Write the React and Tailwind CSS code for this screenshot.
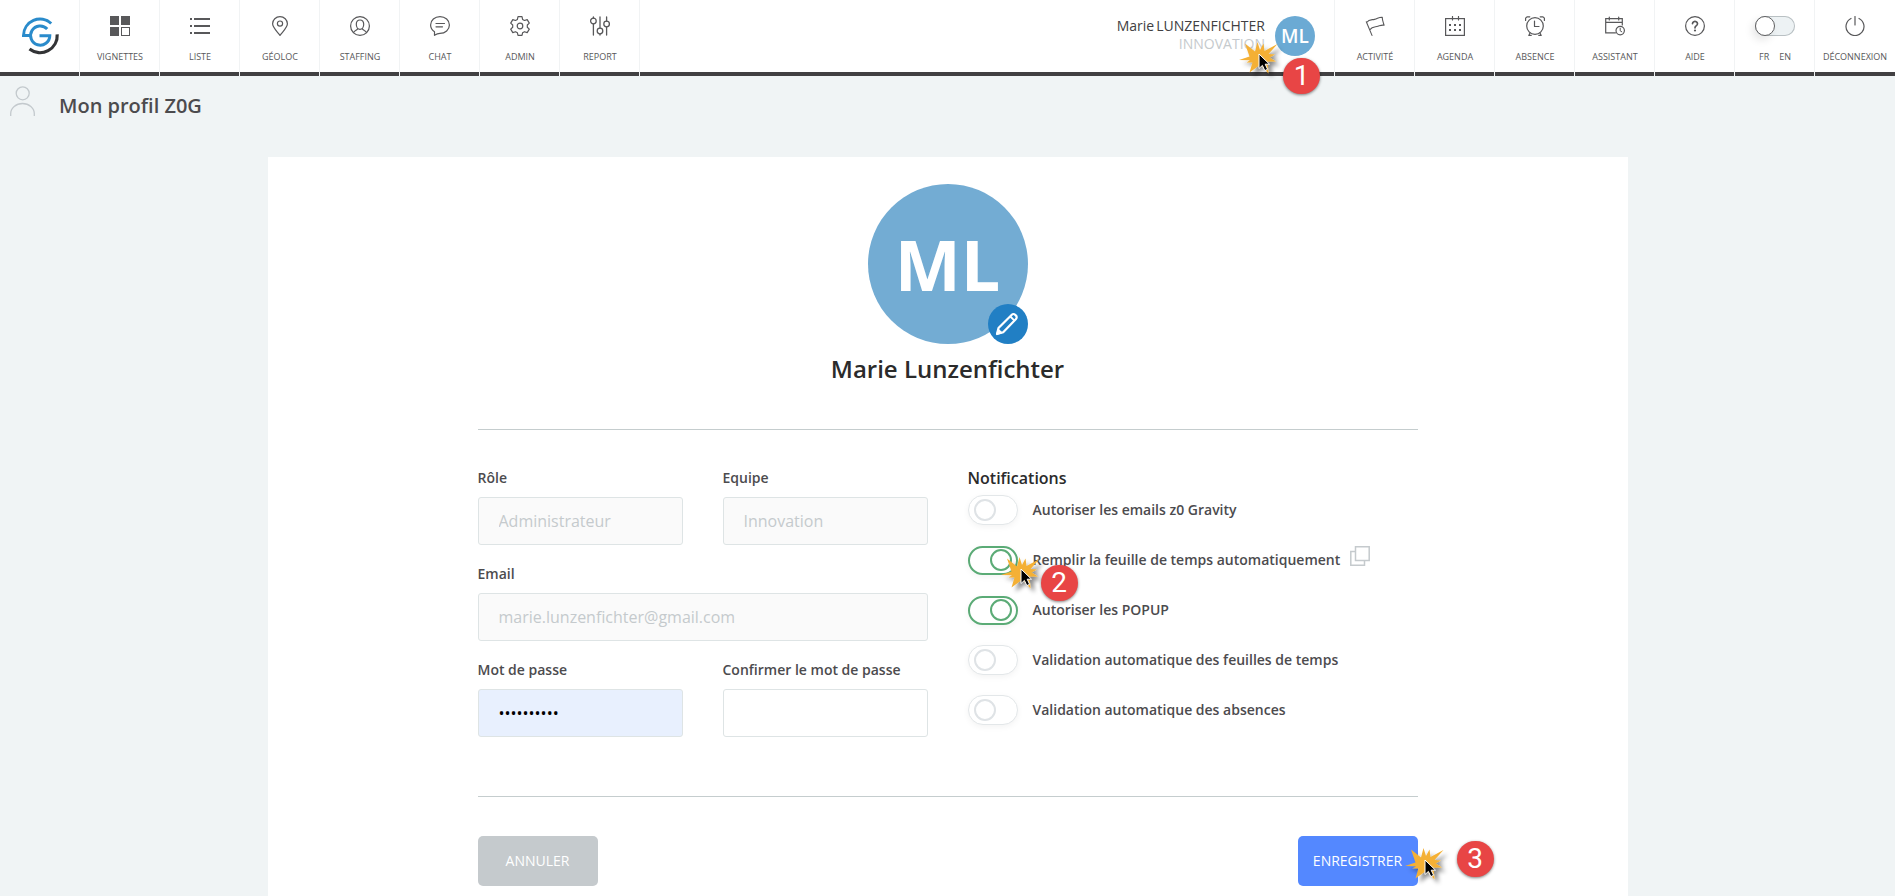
import React from "react";

const stroke = {
  fill: "none",
  stroke: "currentColor",
  strokeWidth: 1.2,
  strokeLinecap: "round",
  strokeLinejoin: "round",
};

function Icon({ children }) {
  return (
    <svg viewBox="0 0 20 20" className="size-5" aria-hidden="true" {...stroke}>
      {children}
    </svg>
  );
}

const icons = {
  vignettes: (
    <Icon>
      <g fill="currentColor" stroke="none">
        <rect width="9" height="9" />
        <rect x="11" width="9" height="9" />
        <rect y="11" width="9" height="9" />
      </g>
      <rect x="11.5" y="11.5" width="8" height="8" strokeWidth="1" strokeLinejoin="miter" />
    </Icon>
  ),
  liste: (
    <Icon>
      <g fill="currentColor" stroke="none">
        <rect y="2" width="2" height="2" />
        <rect x="4" y="2" width="16" height="2" />
        <rect y="9" width="2" height="2" />
        <rect x="4" y="9" width="16" height="2" />
        <rect y="16" width="2" height="2" />
        <rect x="4" y="16" width="16" height="2" />
      </g>
    </Icon>
  ),
  geoloc: (
    <Icon>
      <path d="M10 19.4C7.4 15.8 2.6 11.6 2.6 7.8a7.4 7.2 0 0 1 14.8 0c0 3.800-4.800 8-7.400 11.600Z" />
      <circle cx="10" cy="7.600" r="2.600" />
    </Icon>
  ),
  staffing: (
    <Icon>
      <circle cx="10" cy="10" r="9.400" />
      <path d="M10 4c-2.400 0-3.700 1.700-3.700 4.200 0 2.900 1.600 5.200 3.700 5.200s3.700-2.300 3.700-5.200C13.700 5.700 12.400 4 10 4Z" />
      <path d="M7.700 12.600c0 1.700-3 1.600-4.200 3.900M12.300 12.600c0 1.700 3 1.600 4.200 3.900" />
    </Icon>
  ),
  chat: (
    <Icon>
      <path d="M4.500 19.300V15.700C1.900 14 .6 11.600.6 9c0-4.700 4.200-8.400 9.400-8.400s9.400 3.700 9.400 8.400-4.200 8.400-9.400 8.400c-2.200 0-4 .9-5.500 1.900Z" />
      <path d="M6 7.500h8.500M6 10.800h6.500" />
    </Icon>
  ),
  admin: (
    <Icon>
      <path d="M8 .7h4l.6 2.700 1.900 1.100 2.700-.9 2.100 3.500-2 1.900v2.200l2 1.900-2.100 3.500-2.700-.9-1.900 1.100-.6 2.600H8l-.6-2.600-1.900-1.100-2.700.9-2.100-3.500 2-1.900V9L.7 7.100l2.100-3.500 2.700.9 1.900-1.100Z" />
      <circle cx="10" cy="10" r="2.800" />
    </Icon>
  ),
  report: (
    <Icon>
      <g strokeWidth="1.300">
        <path d="M3.400 1v1.200M3.400 8v11M10 1v11M10 18v1M16.600 1v4.200M16.600 11v8" />
        <circle cx="3.400" cy="5" r="2.800" />
        <circle cx="10" cy="15" r="2.800" />
        <circle cx="16.600" cy="8" r="2.800" />
      </g>
    </Icon>
  ),
  activite: (
    <Icon>
      <path
        strokeWidth="1.100"
        d="M1.300 5.800 7 19.400M1.600 6.500C4 3 6.500 4 9.500 3.400 12.500 2.800 14 1 17.300 1.300c-.2 2.500 1 5.200 1.800 7.900-3.200-.5-4.600.8-7.200 1.300-2.800.5-4.900.2-7.200 3.300"
      />
    </Icon>
  ),
  agenda: (
    <Icon>
      <rect x=".6" y="2.600" width="18.800" height="16.800" strokeLinejoin="miter" />
      <path d="M7.500.5v3.500M13.500.5v3.500" />
      <g fill="currentColor" stroke="none">
        <rect x="4" y="8" width="2" height="2" />
        <rect x="9" y="8" width="2" height="2" />
        <rect x="14" y="8" width="2" height="2" />
        <rect x="4" y="13" width="2" height="2" />
        <rect x="9" y="13" width="2" height="2" />
        <rect x="14" y="13" width="2" height="2" />
      </g>
    </Icon>
  ),
  absence: (
    <Icon>
      <circle cx="10" cy="10" r="8.300" />
      <path d="M9.500 5v5.500h4.500M5 17l-1.200 2.400M15 17l1.200 2.400M3.800 19.400h2.400M13.800 19.400h2.400M.6 4.400V2.200L2 .8h2.800M19.400 4.400V2.200L18 .8h-2.800" />
    </Icon>
  ),
  assistant: (
    <Icon>
      <path d="M10.500 16.800H.7V2.600h16.600V9M.7 6.400h16.600M4.300 1v3M13.700 1v3" strokeLinejoin="miter" />
      <circle cx="15.200" cy="14.600" r="4.200" />
      <path d="M15.200 12.200v2.600l1.600 1" strokeWidth="1" />
    </Icon>
  ),
  aide: (
    <Icon>
      <circle cx="10" cy="10" r="9.400" />
      <path d="M7.500 7.600a2.500 2.300 0 1 1 3.900 2c-.9.600-1.400 1-1.400 2.200" strokeWidth="1.700" />
      <circle cx="10" cy="14.500" r="1.100" fill="currentColor" stroke="none" />
    </Icon>
  ),
  power: (
    <Icon>
      <path d="M10 .5v8.500M6 2.500a9 9 0 1 0 8 0" />
    </Icon>
  ),
};

const leftNav = [
  ["VIGNETTES", icons.vignettes],
  ["LISTE", icons.liste],
  ["GÉOLOC", icons.geoloc],
  ["STAFFING", icons.staffing],
  ["CHAT", icons.chat],
  ["ADMIN", icons.admin],
  ["REPORT", icons.report],
];

const rightNav = [
  ["ACTIVITÉ", icons.activite],
  ["AGENDA", icons.agenda],
  ["ABSENCE", icons.absence],
  ["ASSISTANT", icons.assistant],
  ["AIDE", icons.aide],
];

function Cell({ children, last = false }) {
  return (
    <div className="flex h-[76px] w-20 shrink-0">
      <div className={`flex-1 border-b-4 border-[#414042] ${last ? "" : "pl-px"}`}>{children}</div>
      {!last && <div className="w-px bg-[#f1f3f4]" />}
    </div>
  );
}

function NavLink({ label, icon }) {
  return (
    <a
      href="#"
      className="flex h-full flex-col items-center pt-4 text-[9px] leading-3 whitespace-nowrap text-[#58585a]"
    >
      {icon}
      <span className="mt-[15px]">{label}</span>
    </a>
  );
}

function Logo() {
  return (
    <svg viewBox="0 0 40 40" className="size-10" role="img" aria-label="Gravity" fill="none" strokeWidth="3">
      <path d="M31.200 7.500A16.500 16.500 0 0 0 3.500 19.500H11" stroke="#2a8bcb" />
      <path d="M27.200 13A9.600 9.600 0 1 0 29.800 19.700H19.500" stroke="#2a8bcb" />
      <path d="M37.200 18.300A17.200 17.200 0 0 1 9.500 33" stroke="#333436" strokeWidth="3.200" />
    </svg>
  );
}

function ClickMark() {
  return (
    <svg viewBox="0 0 46 38" className="h-[38px] w-[46px] overflow-visible" aria-hidden="true">
      <defs>
        <filter id="mark-shadow" x="-30%" y="-30%" width="180%" height="180%">
          <feDropShadow dx="4" dy="4" stdDeviation="2" floodColor="#000" floodOpacity=".45" />
        </filter>
      </defs>
      <path
        d="M0 18 10.500 14.500 6 1.500 16 9.500 18.500 0 21 8 24.500 1.500 25.500 9 38.500 2 29.500 12 36 12.500 30.500 15.500 37 19.500 28.500 19.500 29.500 31.500 21.500 22.500 10.500 30.500 13.500 20.500 7.500 20.500 11 18.200Z"
        fill="#f4b034"
        filter="url(#mark-shadow)"
      />
      <path
        d="M20 12V26.500L23.400 23.400 25.800 28.600 28.600 27.300 26.200 22.200H30.500Z"
        fill="#000"
        stroke="#fff"
        strokeWidth="1"
      />
    </svg>
  );
}

function Step({ n }) {
  return (
    <span className="flex h-9 w-[37px] items-center justify-center rounded-full bg-[#e84545] font-['Roboto',sans-serif] text-[28px] leading-none text-white shadow-[0_1px_3px_rgba(0,0,0,0.5)]">
      {n}
    </span>
  );
}

function Field({ id, label, wide = false, tone, ...props }) {
  return (
    <div className={wide ? "col-span-2" : ""}>
      <label htmlFor={id} className="block text-sm leading-5 font-semibold text-[#4c4b4e]">
        {label}
      </label>
      <input
        id={id}
        className={`mt-[9px] block h-12 w-full rounded-[3px] border border-[#dee4e5] px-5 text-base outline-none placeholder:text-[#c5cacd] ${tone}`}
        {...props}
      />
    </div>
  );
}

function Toggle({ id, label, on = false, children }) {
  return (
    <div className="relative flex h-[30px] items-center">
      <input
        id={id}
        type="checkbox"
        defaultChecked={on}
        className="flex h-[30px] w-[50px] shrink-0 appearance-none items-center rounded-full border border-[#e3e7e9] bg-white pl-[5px] shadow-[0_2px_6px_rgba(0,0,0,0.05)] before:block before:size-[22px] before:rounded-full before:border-2 before:border-[#dfe3e6] before:content-[''] checked:h-[29px] checked:border-2 checked:border-[#5bab76] checked:pl-5 checked:before:border-[#5bab76]"
      />
      <label htmlFor={id} className="ml-[15px] text-sm leading-5 font-semibold whitespace-nowrap text-[#4c4b4e]">
        {label}
      </label>
      {children}
    </div>
  );
}

export default function App() {
  return (
    <div className="flex min-h-screen flex-col bg-[#f0f4f5] font-['Open_Sans',sans-serif]">
      <header className="flex bg-white">
        <Cell>
          <a href="#" className="flex h-full items-center justify-center">
            <Logo />
          </a>
        </Cell>
        {leftNav.map(([label, icon]) => (
          <Cell key={label}>
            <NavLink label={label} icon={icon} />
          </Cell>
        ))}
        <div className="relative flex h-[76px] flex-1 justify-end border-b-4 border-[#414042] pr-[19px]">
          <div className="pt-[17px] text-right text-sm leading-[18px]">
            <p className="flex justify-end gap-[2px] text-[#414042]">
              <span>Marie</span>
              <span>LUNZENFICHTER</span>
            </p>
            <p className="text-[#c5cacd]">INNOVATION</p>
          </div>
          <div className="mt-4 ml-[10px] flex size-10 items-center justify-center rounded-full bg-[#6baad4] text-[19px] leading-6 font-semibold text-white">
            ML
          </div>
          <div className="absolute top-[42px] right-[49px]">
            <ClickMark />
          </div>
          <div className="absolute top-[58px] right-[14px]">
            <Step n={1} />
          </div>
        </div>
        <div className="w-px bg-[#f1f3f4]" />
        {rightNav.map(([label, icon]) => (
          <Cell key={label}>
            <NavLink label={label} icon={icon} />
          </Cell>
        ))}
        <Cell>
          <div className="flex flex-col items-center pt-4 text-[9px] leading-3 text-[#58585a]">
            <input
              type="checkbox"
              aria-label="FR / EN"
              className="flex h-5 w-10 appearance-none rounded-full bg-[#edf2f4] shadow-[inset_0_0_0_1px_#b9c0c3] before:block before:size-5 before:rounded-full before:border before:border-[#5f5f61] before:bg-white before:shadow-[-3px_4px_8px_rgba(0,0,0,0.1)] before:content-[''] checked:justify-end"
            />
            <div className="mt-[15px] flex gap-[10px]">
              <span>FR</span>
              <span>EN</span>
            </div>
          </div>
        </Cell>
        <Cell last>
          <NavLink label="DÉCONNEXION" icon={icons.power} />
        </Cell>
      </header>

      <div className="flex h-[81px] items-start pt-[10px] pl-[10px]">
        <svg viewBox="0 0 26 31" className="h-[31px] w-[26px]" fill="none" stroke="#c3c9cd" strokeWidth="1.300" aria-hidden="true">
          <circle cx="12.700" cy="7.300" r="6.500" />
          <path d="M.7 30V27.500a11.800 10 0 0 1 23.600 0V30" />
        </svg>
        <h1 className="ml-[23px] pt-[6px] text-xl leading-7 font-semibold text-[#4c4b4e]">Mon profil Z0G</h1>
      </div>

      <main className="mx-auto w-full max-w-[1360px] flex-1 bg-white pt-[27px]">
        <div className="mx-auto w-full max-w-[940px]">
          <div className="flex flex-col items-center">
            <div className="relative flex size-40 items-center justify-center rounded-full bg-[#73acd3] text-[70px] font-bold text-white">
              ML
              <button
                type="button"
                aria-label="Modifier"
                className="absolute right-0 bottom-0 flex size-10 items-center justify-center rounded-full bg-[#217fc4]"
              >
                <svg viewBox="0 0 24 24" className="mr-[2px] size-6" fill="none" stroke="#fff" strokeWidth="2.200" strokeLinejoin="round" aria-hidden="true">
                  <path d="M3.500 16 16.800 2.700a2.300 2.300 0 0 1 3.300 0l.9.900a2.300 2.300 0 0 1 0 3.300L8.200 20.200 2 22Z" />
                  <path d="m15.300 4.500 4.200 4.200" strokeWidth="1.800" />
                  <path d="M2 22 3.300 17.500l3.400 3.300Z" fill="#fff" strokeWidth="1.500" />
                </svg>
              </button>
            </div>
            <h2 className="mt-[9px] text-2xl leading-8 font-semibold text-[#2b2b2b]">Marie Lunzenfichter</h2>
          </div>

          <form onSubmit={(e) => e.preventDefault()} className="mt-11 border-t border-[#c5cdce]">
            <div className="mt-[38px] grid grid-cols-2 gap-10 border-b border-[#c5cdce] pb-[59px]">
              <div className="grid grid-cols-2 gap-x-10 gap-y-[19px]">
                <Field id="role" label="Rôle" placeholder="Administrateur" disabled tone="bg-[#fafafa]" />
                <Field id="team" label="Equipe" placeholder="Innovation" disabled tone="bg-[#fafafa]" />
                <Field id="email" label="Email" wide placeholder="marie.lunzenfichter@gmail.com" disabled tone="bg-[#fafafa]" />
                <Field id="pwd" label="Mot de passe" type="password" defaultValue="gravity123" tone="bg-[#e8f0fe] text-black" />
                <Field id="pwd2" label="Confirmer le mot de passe" type="password" tone="bg-white" />
              </div>
              <fieldset>
                <legend className="text-base leading-5 font-semibold text-[#2b2b2b]">Notifications</legend>
                <div className="mt-[7px] flex flex-col gap-5">
                  <Toggle id="n1" label="Autoriser les emails z0 Gravity" />
                  <Toggle id="n2" label="Remplir la feuille de temps automatiquement" on>
                    <button type="button" aria-label="Dupliquer" className="-mt-2 ml-[10px]">
                      <svg viewBox="0 0 20 20" className="size-5" fill="none" stroke="#c5cacd" strokeWidth="1.500">
                        <path d="M5.500.8h13.700v13.700H5.500ZM5.500 5.500H.8v13.700h13.700v-4.700" />
                      </svg>
                    </button>
                    <div className="absolute top-3 left-[33px]">
                      <ClickMark />
                    </div>
                    <div className="absolute top-5 left-[73px]">
                      <Step n={2} />
                    </div>
                  </Toggle>
                  <Toggle id="n3" label="Autoriser les POPUP" on />
                  <Toggle id="n4" label="Validation automatique des feuilles de temps" />
                  <Toggle id="n5" label="Validation automatique des absences" />
                </div>
              </fieldset>
            </div>
            <div className="mt-[39px] flex justify-between">
              <button type="button" className="h-[50px] w-[120px] rounded-[5px] bg-[#c5cacd] text-sm text-white">
                ANNULER
              </button>
              <div className="relative">
                <button type="submit" className="h-[50px] w-[120px] rounded-[5px] bg-[#5488ff] text-sm text-white">
                  ENREGISTRER
                </button>
                <div className="absolute top-3 left-[107px]">
                  <ClickMark />
                </div>
                <div className="absolute top-[5px] left-[159px]">
                  <Step n={3} />
                </div>
              </div>
            </div>
          </form>
        </div>
      </main>
    </div>
  );
}
